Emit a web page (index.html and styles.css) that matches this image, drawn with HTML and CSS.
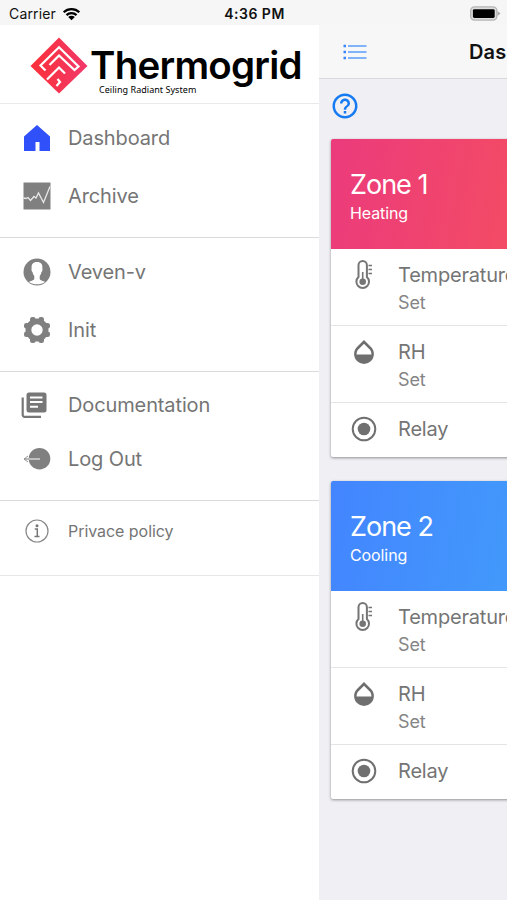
FILE: index.html
```html
<!DOCTYPE html>
<html lang="en">
<head>
<meta charset="utf-8">
<title>Thermogrid</title>
<link rel="stylesheet" href="styles.css">
</head>
<body>
<svg class="defs" aria-hidden="true">
  <symbol id="thermo" viewBox="0 0 22 32">
    <path d="M5.500 18V6.200a4.200 4.200 0 0 1 8.400 0V18a6.300 6.300 0 1 1-8.400 0z" fill="none" stroke="#757575" stroke-width="2"/>
    <circle cx="9.700" cy="22.800" r="3.300" fill="#757575"/>
    <path d="M9.700 13v9M15.500 6.500h3.500M15.500 10.500h3.500M15.500 14.500h3.500" stroke="#757575" stroke-width="1.600"/>
  </symbol>
  <symbol id="drop" viewBox="1.500 1.500 21 21">
    <path d="M17.660 8 12 2.350 6.340 8C4.780 9.560 4 11.640 4 13.640s.78 4.110 2.340 5.670a7.990 7.990 0 0 0 11.320 0C19.220 17.750 20 15.640 20 13.640S19.220 9.560 17.660 8zM6 14c.01-2 .62-3.270 1.760-4.400L12 5.270l4.240 4.380C17.380 10.770 17.990 12 18 14H6z" fill="#6f6f6f"/>
  </symbol>
  <symbol id="relay" viewBox="0 0 26 26">
    <circle cx="13" cy="13" r="11.300" fill="none" stroke="#707070" stroke-width="2"/>
    <circle cx="13" cy="13" r="6.300" fill="#707070"/>
  </symbol>
</svg>
<div class="status">
  <div class="carrier">Carrier
    <svg class="wifi" viewBox="0 0 20 14"><path d="M1.800 5.200a11.800 11.800 0 0 1 16.400 0M4.700 8.200a7.600 7.600 0 0 1 10.600 0" fill="none" stroke="#000" stroke-width="2.400"/><path d="M6.500 10.200a5 5 0 0 1 7 0L10 13.700z"/></svg>
  </div>
  <div class="clock">4:36 PM</div>
  <svg class="battery" viewBox="0 0 32 16"><rect x=".7" y=".7" width="27" height="13.600" rx="4" fill="#ddd" stroke="#b4b4b4" stroke-width="1.400"/><rect x="3" y="3" width="22.500" height="9" rx="1.500"/><path d="M28.500 5l3 2.500-3 2.500z" fill="#aaa"/></svg>
</div>
<div class="app">
  <nav class="drawer">
    <header class="brand">
      <svg class="mark" viewBox="0 0 58 58">
        <defs><linearGradient id="g"><stop stop-color="#fb3038"/><stop offset="1" stop-color="#f2386a"/></linearGradient></defs>
        <path d="M29 .5 57.500 29 29 56.500.5 29z" fill="url(#g)"/>
        <path d="M15.500 33.500 10.500 28.500 29 10.300 48.500 29.500 44.500 33 29 18.500 19.500 28M17 42.500 29 30.500 35 36.500M26.500 49l3.500-4-2.500-3" fill="none" stroke="#fff" stroke-width="2.200"/>
      </svg>
      <div class="words"><div class="name">Thermogrid</div><div class="tag">Ceiling Radiant System</div></div>
    </header>
    <section class="group first">
      <a class="item"><svg class="ico" viewBox="0 0 28 28"><path d="M14 1 1 12.500V27h11.500v-9h4v9H27V12.500z" fill="#3050fa"/></svg><span>Dashboard</span></a>
      <a class="item"><svg class="ico" viewBox="0 0 28 28"><path d="M.5.5h27v27H.5z" fill="#808080"/><path d="M.5 16 3 16.500l2-1 2.500 3 3.500-4 2 1.500 2.500-5 5 9.500L27 4.500" fill="none" stroke="#e8e8e8" stroke-width="1.300"/></svg><span>Archive</span></a>
    </section>
    <section class="group second">
      <a class="item"><svg class="ico" viewBox="0 0 28 28"><circle cx="14" cy="14" r="13.500" fill="#808080"/><path d="M14 4c-4 0-6 2.700-5.300 6.500-.8.700.1 3 .9 3.700.4 2 1 3 1.700 3.700v3c-.5 1.600-3.800 1.800-5.300 3 4.500 3.200 11.500 3.200 16 0-1.500-1.200-4.800-1.400-5.300-3v-3c.7-.7 1.300-1.700 1.700-3.700.8-.7 1.700-3 .9-3.700C20 6.700 18 4 14 4z" fill="#fff"/></svg><span>Veven-v</span></a>
      <a class="item"><svg class="ico" viewBox="0 0 28 28"><g fill="#808080"><circle cx="14" cy="14" r="11.500"/><rect x="7" y="1" width="5.600" height="26" rx="2.300"/><rect x="15.400" y="1" width="5.600" height="26" rx="2.300"/><rect x="1" y="7" width="26" height="5.600" rx="2.300"/><rect x="1" y="15.400" width="26" height="5.600" rx="2.300"/></g><circle cx="14" cy="14" r="5.700" fill="#fff"/></svg><span>Init</span></a>
    </section>
    <section class="group third">
      <a class="item"><svg class="ico docs" viewBox="0 0 28 28"><path d="M2.700 6.500V24a1.800 1.800 0 0 0 1.800 1.800H21" fill="none" stroke="#777" stroke-width="2.200"/><rect x="6.500" y="1.500" width="20" height="20" rx="2.500" fill="#777"/><path d="M10 6.500h12.500M10 11h12.500M10 15.700h8" stroke="#fff" stroke-width="2"/></svg><span>Documentation</span></a>
      <a class="item"><svg class="ico" viewBox="0 0 28 28"><circle cx="16.500" cy="13.700" r="10.800" fill="#808080"/><path d="M1 14h16" stroke="#d5d5d5" stroke-width="1.500"/><path d="M5 11l-4 3 4 3M1 14h5" fill="none" stroke="#8a8a8a" stroke-width=".9"/></svg><span>Log Out</span></a>
    </section>
    <section class="group fourth">
      <a class="item small"><svg class="ico" viewBox="0 0 28 28"><circle cx="14" cy="14" r="11" fill="none" stroke="#888" stroke-width="1.200"/><circle cx="14" cy="8.800" r="1.500" fill="#777"/><path d="M11.800 12h2.500v7.500M11.500 19.500h5" fill="none" stroke="#777" stroke-width="1.500"/></svg><span>Privace policy</span></a>
    </section>
  </nav>
  <main class="page">
    <header class="bar"><svg class="list" viewBox="0 0 24 16"><path d="M5 2h18.500M5 8h18.500M5 14h18.500" stroke="#5a9dfa" stroke-width="1.400"/><path d="M.5 2h2.500M.5 8h2.500M.5 14h2.500" stroke="#3a86f5" stroke-width="2.300"/></svg><h1>Dashboard</h1></header>
    <svg class="help" viewBox="0 0 24 24"><path d="M11 18h2v-2h-2v2zm1-16C6.480 2 2 6.480 2 12s4.480 10 10 10 10-4.480 10-10S17.520 2 12 2zm0 18c-4.410 0-8-3.590-8-8s3.590-8 8-8 8 3.590 8 8-3.590 8-8 8zm0-14c-2.210 0-4 1.790-4 4h2c0-1.100.9-2 2-2s2 .9 2 2c0 2-3 1.750-3 5h2c0-2.250 3-2.500 3-5 0-2.210-1.790-4-4-4z" fill="#167bf2"/></svg>
    <article class="card">
      <header class="zone heat"><h2>Zone 1</h2><p>Heating</p></header>
      <div class="row"><svg class="sym thermo"><use href="#thermo"/></svg><div><b>Temperature</b><i>Set</i></div></div>
      <div class="row"><svg class="sym"><use href="#drop"/></svg><div><b>RH</b><i>Set</i></div></div>
      <div class="row relay"><svg class="sym"><use href="#relay"/></svg><div><b>Relay</b></div></div>
    </article>
    <article class="card">
      <header class="zone cool"><h2>Zone 2</h2><p>Cooling</p></header>
      <div class="row"><svg class="sym thermo"><use href="#thermo"/></svg><div><b>Temperature</b><i>Set</i></div></div>
      <div class="row"><svg class="sym"><use href="#drop"/></svg><div><b>RH</b><i>Set</i></div></div>
      <div class="row relay"><svg class="sym"><use href="#relay"/></svg><div><b>Relay</b></div></div>
    </article>
  </main>
</div>
</body>
</html>
```
FILE: styles.css
```css
* { box-sizing: border-box; }
body { margin: 0; width: 507px; height: 900px; overflow: hidden; font-family: Inter, "Liberation Sans", sans-serif; background: #fff; color: #757575; }
svg { display: block; flex: none; }
.defs { display: none; }
h1, h2, p { margin: 0; font-weight: 400; }
.status { height: 25px; background: #f6f6f6; display: grid; grid-template-columns: 1fr auto 1fr; align-items: center; padding: 2px 6px 0 9px; color: #111; }
.carrier { display: flex; align-items: center; gap: 6px; font-size: 14px; line-height: 20px; letter-spacing: .15px; }
.wifi { width: 19px; height: 14px; }
.clock { font-size: 14px; font-weight: 600; line-height: 20px; letter-spacing: .5px; margin-left: -1px; }
.battery { width: 31px; height: 16px; justify-self: end; }
.app { display: flex; height: 875px; }
.drawer { width: 319px; flex: none; background: #fff; }
.brand { height: 79px; border-bottom: 1px solid #e9e9e9; display: flex; padding: 12px 0 0 30px; gap: 2px; }
.mark { width: 58px; height: 58px; }
.words { color: #000; }
.name { font-size: 38.500px; font-weight: 600; line-height: 40px; height: 47px; padding-top: 8px; letter-spacing: -.75px; }
.tag { font-family: "Noto Sans", sans-serif; font-size: 9px; line-height: 11px; padding-left: 9px; white-space: nowrap; letter-spacing: .04px; }
.group { border-bottom: 1px solid #dadada; }
.item { display: flex; align-items: center; gap: 17px; padding-left: 23px; height: 58px; font-size: 20px; line-height: 28px; color: #757575; letter-spacing: -.12px; }
.ico { width: 28px; height: 28px; }
.docs { margin-left: -3px; margin-right: 3px; }
.first { height: 134px; padding-top: 5px; }
.second { height: 134px; padding-top: 5px; }
.third { height: 129px; padding-top: 6px; }
.third .item { height: 54px; }
.fourth { height: 75px; border-color: #e6e6e6; padding-top: 1px; }
.small { font-size: 16px; letter-spacing: -.05px; }
.page { flex: 1; min-width: 0; background: #efeff4; overflow: hidden; }
.bar { height: 54px; background: #f7f7f8; border-bottom: 1px solid #d8d8dc; display: flex; align-items: center; padding-left: 24px; }
.list { width: 24px; height: 16px; margin-right: 102px; }
h1 { font-size: 20px; font-weight: 600; color: #111; line-height: 28px; letter-spacing: .1px; }
.help { width: 30px; height: 30px; margin: 12px 0 0 11px; }
.card { width: 340px; margin: 18px 0 24px 12px; background: #fff; border-radius: 2px; box-shadow: 0 1px 3px rgba(0,0,0,.4); overflow: hidden; }
.zone { height: 110px; padding: 30px 0 0 19px; color: #fff; }
.heat { background: linear-gradient(100deg, #eb3b7c, #f34a66 52%, #fa5850); }
.cool { background: linear-gradient(100deg, #4385ff, #4298fb 52%, #40a8f8); }
h2 { font-size: 27px; line-height: 32px; letter-spacing: -1px; }
.zone p { font-size: 16px; line-height: 24px; letter-spacing: -.1px; }
.row { display: flex; height: 77px; padding: 11px 0 0 20px; gap: 22px; border-bottom: 1px solid #e4e4e4; }
.row b, .row i { display: block; font: 400 20px/30px Inter, sans-serif; color: #757575; letter-spacing: -.2px; }
.row div { margin-left: -1px; }
.row i { font-size: 18px; line-height: 26px; color: #858585; letter-spacing: -.1px; }
.sym { width: 26px; height: 26px; margin-top: 2px; }
.thermo { height: 32px; margin-top: -1px; }
.relay { height: 54px; border-bottom: 0; }
```
